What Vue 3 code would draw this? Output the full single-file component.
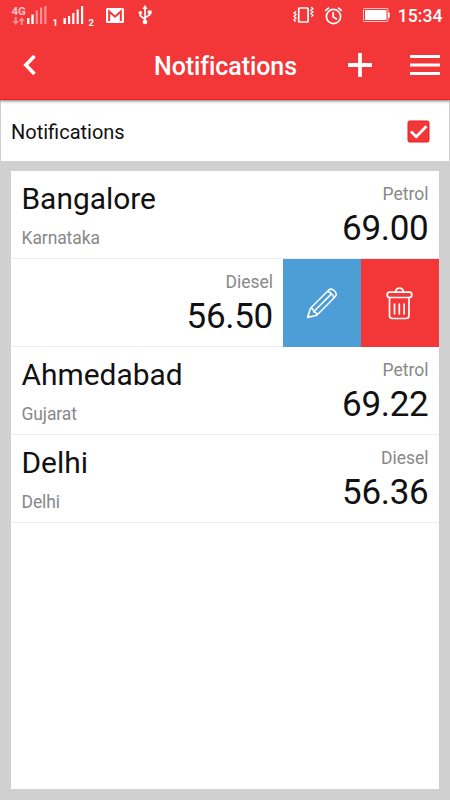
<script setup>
import { ref } from 'vue'

const enabled = ref(true)
const alerts = [
  { city: 'Bangalore', state: 'Karnataka', fuel: 'Petrol', price: '69.00' },
  { city: '', state: '', fuel: 'Diesel', price: '56.50', open: true },
  { city: 'Ahmedabad', state: 'Gujarat', fuel: 'Petrol', price: '69.22' },
  { city: 'Delhi', state: 'Delhi', fuel: 'Diesel', price: '56.36' },
]
</script>

<template>
  <div class="screen">
    <header class="top">
      <div class="status">
        <div class="status-left">
          <svg class="signal" width="84" height="30" viewBox="0 0 84 30">
            <text class="net" x="0.5" y="15">4G</text>
            <g class="dim">
              <path d="M3.7 17v4H1.3l3.4 4 3.4-4H5.7v-4zM9.7 25v-4H7.7l3-4 3 4h-2v4z" />
              <rect x="24.7" y="10.5" width="2.2" height="13.5" />
              <rect x="29" y="7.5" width="2.2" height="16.5" />
              <rect x="33.3" y="6" width="2.2" height="18" />
            </g>
            <rect x="16" y="18" width="2.4" height="6" />
            <rect x="20.3" y="14.5" width="2.4" height="9.5" />
            <text class="sim" x="41.5" y="25.5">1</text>
            <rect x="52.5" y="18" width="2.4" height="6" />
            <rect x="57" y="16" width="2.2" height="8" />
            <rect x="61.2" y="13" width="2.2" height="11" />
            <rect x="65.6" y="9.5" width="2.2" height="14.5" />
            <rect x="70" y="6" width="2.2" height="18" />
            <text class="sim" x="77.5" y="25.5">2</text>
          </svg>
          <svg class="mail" width="18" height="15" viewBox="0 0 18 15">
            <rect width="18" height="15" rx="1.5" />
            <path class="cut" d="M3.2 13V3.5L9 8.7 14.8 3.5V13" />
          </svg>
          <svg class="usb" width="14" height="20" viewBox="0 0 14 20">
            <path class="line" d="M7 3v14M2.3 8v2.8L7 14.2M11.7 7.5v2.2L7 12.8" />
            <path d="M7 0 9.6 4H4.4zM9.8 5.5h3.8V9H9.8z" />
            <circle cx="2.3" cy="7.7" r="1.8" />
            <circle cx="7" cy="17" r="2.3" />
          </svg>
        </div>
        <div class="status-right">
          <svg class="vibrate" width="21" height="18" viewBox="0 0 21 18">
            <rect class="phone" x="5.7" y="2" width="9.4" height="14" rx="0.8" />
            <path class="thin" d="M3 5.2 1 7l2 1.6L1 10.4l2 1.7-2 1.7 1.5 1.7M18.3 1l1.6 1.7-2 1.6 2 1.7-2 1.6 2 1.7-1.6 1.6" />
          </svg>
          <svg class="alarm" width="19" height="19" viewBox="0 0 19 19">
            <circle cx="9.5" cy="10.5" r="7.1" />
            <path d="M9.2 6v5l3.8 2.3M1.2 4.8 5 1.6M17.8 4.8 14 1.6" />
          </svg>
          <svg class="battery" width="27" height="15" viewBox="0 0 27 15">
            <rect class="case" x="0.5" y="0.5" width="24.5" height="13" rx="0.7" />
            <rect x="2" y="2" width="21.5" height="10" />
            <path d="M25 4.5h1.7v5.2H25z" />
          </svg>
          <span class="clock">15:34</span>
        </div>
      </div>
      <div class="bar">
        <svg class="back" width="14" height="22" viewBox="0 0 14 22">
          <path d="M11.5 2 2.8 11l8.7 9" />
        </svg>
        <h1>Notifications</h1>
        <svg class="plus" width="24" height="24" viewBox="0 0 24 24">
          <path d="M12 0v24M0 12h24" />
        </svg>
        <svg class="menu" width="30" height="22" viewBox="0 0 30 22">
          <path d="M0 2.5h30M0 11h30M0 19.5h30" />
        </svg>
      </div>
    </header>

    <section class="toggle" @click="enabled = !enabled">
      <span>Notifications</span>
      <svg width="23" height="23" viewBox="0 0 23 23">
        <rect class="box" x="1" y="1" width="21" height="21" rx="1.5" />
        <path v-if="enabled" class="tick" d="m4 11.5 5.2 5.2 10.3-10.4" />
      </svg>
    </section>

    <main class="list">
      <article v-for="item in alerts" :key="item.price" class="row" :class="{ open: item.open }">
        <div class="place">
          <div class="city">{{ item.city }}</div>
          <div class="small">{{ item.state }}</div>
        </div>
        <div class="rate">
          <div class="small">{{ item.fuel }}</div>
          <div class="price">{{ item.price }}</div>
        </div>
        <div v-if="item.open" class="actions">
          <button class="edit">
            <svg width="32" height="32" viewBox="0 0 32 32">
              <path d="M1.5 30.5 4.5 21.3 22.5 3.3C25.800-.2 32.600 6 29.200 9.700L10.800 28.300ZM4.500 21.300q3.300.2 3.100 3.400 3.300.2 3.200 3.600M7.600 24.700 25.500 6.900M21 4.800q3.200-.2 4.500 2.100 2.300 1.200 2.200 4.300M1.800 28.200l2 1.500" />
            </svg>
          </button>
          <button class="remove">
            <svg width="27" height="33" viewBox="0 0 27 33">
              <path d="M3.5 10.5v18q0 3 3 3h13.500q3 0 3-3v-18M9.500 5.200Q10 1.200 13.500 1.200t4 4M8.500 17v10M13.300 17v10M18.100 17v10" />
              <rect x="1.2" y="5.2" width="24.6" height="5.3" rx="2.4" />
            </svg>
          </button>
        </div>
      </article>
    </main>
  </div>
</template>

<style>
body {
  margin: 0;
}
</style>

<style scoped>
.screen {
  box-sizing: border-box;
  display: flex;
  flex-direction: column;
  width: 450px;
  height: 800px;
  padding-bottom: 11px;
  overflow: hidden;
  background: #d0d0d0;
  color: #111;
  font-family: Roboto, sans-serif;
}
.top {
  position: relative;
  z-index: 1;
  height: 100px;
  box-sizing: border-box;
  border-bottom: 1px solid #f01d1d;
  background: #f33637;
  color: #fff;
  box-shadow: 0 1px 3px rgba(0, 0, 0, 0.55);
}
.status,
.status-left,
.status-right,
.bar {
  display: flex;
}
.status {
  justify-content: space-between;
  height: 30px;
  padding: 0 7.5px 0 11px;
  fill: #fff;
}
.status-right {
  align-items: center;
}
.net {
  font-size: 11.5px;
  font-weight: 700;
  opacity: 0.7;
}
.sim {
  font-size: 9.5px;
  font-weight: 700;
}
.dim {
  opacity: 0.45;
}
.mail {
  margin: 8px 0 0 10.5px;
}
.cut {
  fill: none;
  stroke: #f33637;
  stroke-width: 2;
}
.usb {
  margin: 5px 0 0 14.5px;
}
.line,
.phone,
.thin,
.alarm {
  fill: none;
  stroke: #fff;
  stroke-width: 1.7;
}
.thin {
  stroke-width: 1.3;
}
.alarm {
  margin-left: 10.5px;
}
.battery {
  margin-left: 19.5px;
}
.case {
  fill: none;
  stroke: #fff;
  stroke-opacity: 0.7;
}
.clock {
  margin: 2px 0 0 8px;
  font-size: 17.6px;
  font-weight: 500;
  line-height: 24px;
}
.bar {
  align-items: center;
  height: 70px;
  padding: 0 10px 0 23px;
  fill: none;
  stroke: #fff;
}
.back {
  stroke-width: 3.6;
}
h1 {
  flex: 1;
  margin: 4px 0 0 117px;
  font-size: 25px;
  font-weight: 500;
  line-height: 30px;
  letter-spacing: -0.08px;
}
.plus {
  margin-right: 38px;
  stroke-width: 3.8;
}
.menu {
  stroke-width: 3.2;
}
.toggle {
  display: flex;
  align-items: center;
  justify-content: space-between;
  box-sizing: border-box;
  height: 61px;
  margin: 0 1px;
  padding: 1px 19px 0 10px;
  background: #fff;
  font-size: 20px;
}
.toggle span {
  padding-top: 2px;
}
.box {
  fill: #f33637;
  stroke: #f01d1d;
}
.tick {
  fill: none;
  stroke: #fff;
  stroke-width: 2.8;
}
.list {
  flex: 1;
  margin: 10px 11px 0;
  background: #fff;
}
.row {
  display: flex;
  justify-content: space-between;
  box-sizing: border-box;
  height: 88px;
  padding: 10px 10.5px 0 10.5px;
  border-bottom: 1px solid #ececec;
}
.row.open {
  padding: 0;
}
.open .place {
  flex: 1;
}
.city {
  font-size: 29.9px;
  line-height: 36px;
}
.small {
  color: #888;
  font-size: 17.5px;
  line-height: 24px;
}
.place .small {
  margin-top: 9px;
  letter-spacing: -0.1px;
}
.rate {
  padding-top: 1px;
  text-align: right;
}
.open .rate {
  padding: 11px 10px 0 0;
}
.price {
  margin-top: 2px;
  font-size: 35px;
  line-height: 42px;
  letter-spacing: -0.3px;
}
.actions {
  display: flex;
  height: 88px;
}
button {
  display: flex;
  align-items: center;
  justify-content: center;
  width: 78px;
  padding: 0;
  border: 0;
  fill: none;
  stroke: #fff;
  stroke-width: 1.5;
  stroke-linejoin: round;
  stroke-linecap: round;
}
.edit {
  background: #4d9dd7;
}
.edit svg {
  margin-right: 1px;
}
.remove {
  background: #f33637;
}
.remove svg {
  margin-right: 1px;
  stroke-width: 1.7;
}
</style>
